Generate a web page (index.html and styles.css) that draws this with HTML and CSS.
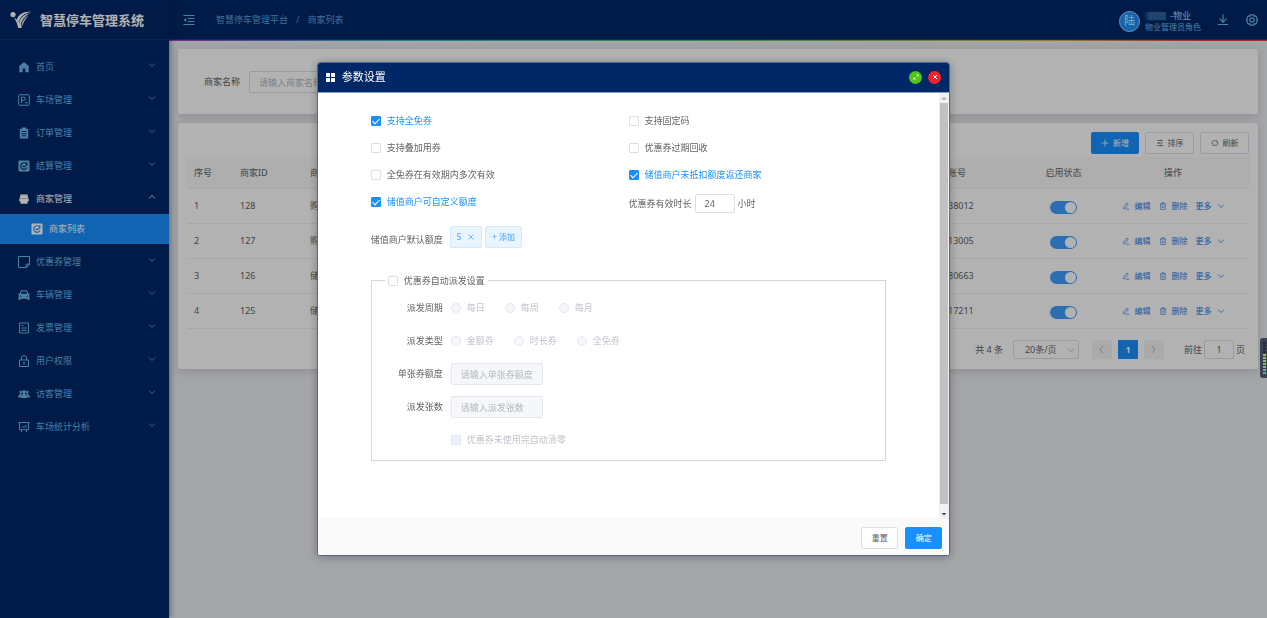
FILE: index.html
```html
<!DOCTYPE html>
<html lang="zh-CN">
<head>
<meta charset="utf-8">
<meta name="viewport" content="width=device-width, initial-scale=1">
<title>智慧停车管理系统</title>
<link rel="stylesheet" href="styles.css">
</head>
<body>
<svg class="sprite" aria-hidden="true">
  <symbol id="chevron" viewBox="0 0 8 8"><path d="M1 2.5 4 5.5 7 2.5" fill="none" stroke="currentColor" stroke-width=".8"/></symbol>
  <symbol id="pencil" viewBox="0 0 10 10"><path d="M2 6.300 6 1.200 7.800 2.600 3.900 7.900 1.700 8.400zM4.500 9H9" fill="none" stroke="currentColor" stroke-width=".8"/></symbol>
  <symbol id="trash" viewBox="0 0 10 10"><path d="M1 2.5h8M2.200 2.500v6.800h5.600V2.500M3.600 2.300V.9h2.800v1.400M4.100 4.500v3M5.900 4.500v3" fill="none" stroke="currentColor" stroke-width=".8"/></symbol>
  <symbol id="refresh-square" viewBox="0 0 12 12"><path fill="currentColor" d="M1.500.5h9a1 1 0 0 1 1 1v9a1 1 0 0 1-1 1h-9a1 1 0 0 1-1-1v-9a1 1 0 0 1 1-1z"/><path class="cut" d="M9 2.200 8.600 4A3.300 3.300 0 1 0 9 7.500M9.600 4.400 6 6.800 4.600 5.800" fill="none" stroke-width="1.100"/></symbol>
</svg>

<div class="app">
  <aside class="sidebar">
    <div class="brand">
      <svg class="brand-logo" viewBox="0 0 22 18" aria-hidden="true"><g fill="#fff"><circle cx="3" cy="3.500" r="2.600"/><path d="M3.500 6.300c2.200 2.200 3.700 6.200 4.700 10.700h3.400C10.300 12.500 8.100 8.500 3.500 6.300z"/><path d="M21.500.8C14-.2 7.800 3.500 7 8.500l2 3.100C9.400 6.500 13.500 2.500 21.500.8z"/><path d="M20.500 2.100c-6.800 1.400-10.600 5-11.200 10.200l1.400 3c.4-5.700 3.700-9.700 9.800-13.200z"/><path d="M18.500 4.700c-4.500 2.400-6.900 6.500-7.300 12.300 2-4.800 3.600-8.500 7.300-12.300z"/></g></svg>
      <h1 class="brand-name">智慧停车管理系统</h1>
    </div>
    <nav class="menu" aria-label="主菜单">
      <a class="menu-item" href="#"><svg class="icon" viewBox="0 0 12 12"><path d="M6 1 1.300 5v6.300H4.700V7.500h2.600v3.800h3.400V5z" fill="currentColor"/></svg><span>首页</span><svg class="arrow"><use href="#chevron"/></svg></a>
      <a class="menu-item" href="#"><svg class="icon" viewBox="0 0 12 12"><rect x=".7" y=".7" width="10.600" height="10.600" rx="1" fill="none" stroke="currentColor"/><path d="M3.500 9V3.200h2.200a1.600 1.600 0 0 1 0 3.200H3.500M7 8.800h2.800" fill="none" stroke="currentColor"/></svg><span>车场管理</span><svg class="arrow"><use href="#chevron"/></svg></a>
      <a class="menu-item" href="#"><svg class="icon" viewBox="0 0 12 12"><path d="M1.800 2h2V.6h4.400V2h2v9.500H1.800z" fill="currentColor"/><path d="M3.500 4.500h5M3.500 6.700h5M3.500 8.900h5" class="cut"/></svg><span>订单管理</span><svg class="arrow"><use href="#chevron"/></svg></a>
      <a class="menu-item" href="#"><svg class="icon"><use href="#refresh-square"/></svg><span>结算管理</span><svg class="arrow"><use href="#chevron"/></svg></a>
      <a class="menu-item open" href="#"><svg class="icon" viewBox="0 0 12 12"><path d="M2.500 1.500h7l.7 3.500H1.800zM1.300 5.200h9.400v3.300H1.300zM2.500 8.200h7v2.600h-7z" fill="currentColor"/></svg><span>商家管理</span><svg class="arrow"><use href="#chevron"/></svg></a>
      <a class="menu-sub" href="#" aria-current="page"><svg class="icon"><use href="#refresh-square"/></svg><span>商家列表</span></a>
      <a class="menu-item" href="#"><svg class="icon" viewBox="0 0 12 12"><path d="M.5.5h11v8l-3 3h-8zM11.400 8.100H8.300v3.300z" fill="none" stroke="currentColor"/></svg><span>优惠券管理</span><svg class="arrow"><use href="#chevron"/></svg></a>
      <a class="menu-item" href="#"><svg class="icon" viewBox="0 0 12 12"><path fill="currentColor" fill-rule="evenodd" d="M3 1.300h6l1.300 3.200 1.500-.3v1l-.8.300.4 1.500v4H9.500V9.700h-7V11H.6V7L1 5.500.2 5.200v-1l1.500.3zM3.700 2.400 2.900 4.800h6.200l-.8-2.400zM2 6.300v1.400h2zM10 6.300v1.400H8z"/></svg><span>车辆管理</span><svg class="arrow"><use href="#chevron"/></svg></a>
      <a class="menu-item" href="#"><svg class="icon" viewBox="0 0 12 12"><path d="M1.500 1h9v10h-9zM3.500 3.500h2M3.500 6h5M3.500 8.400h5" fill="none" stroke="currentColor"/></svg><span>发票管理</span><svg class="arrow"><use href="#chevron"/></svg></a>
      <a class="menu-item" href="#"><svg class="icon" viewBox="0 0 12 12"><path d="M1.500 5h9v6.500h-9zM3.500 5V3a2.500 2.500 0 0 1 5 0v2M6 7v2.800M5.200 7.500h1.600" fill="none" stroke="currentColor"/></svg><span>用户权限</span><svg class="arrow"><use href="#chevron"/></svg></a>
      <a class="menu-item" href="#"><svg class="icon" viewBox="0 0 12 12"><g fill="currentColor"><circle cx="6" cy="3.700" r="1.700"/><circle cx="2.800" cy="4.100" r="1.300"/><circle cx="9.200" cy="4.100" r="1.300"/><path d="M2.800 10C2.800 7.500 4.800 7.300 5 5h2c.2 2.300 2.200 2.500 2.200 5zM0 9.500c0-2.200 1.800-2.200 2-4h1.500v1.800L2.500 9.500zM12 9.500c0-2.200-1.800-2.200-2-4H8.500v1.800l1 2.200z"/></g></svg><span>访客管理</span><svg class="arrow"><use href="#chevron"/></svg></a>
      <a class="menu-item" href="#"><svg class="icon" viewBox="0 0 12 12"><path d="M.5 1.500h11M1.500 1.500v7.200h9V1.500M3.500 9v2.300M8.500 9v2.300M4 6.800V5.500M6 6.800V4.800M8 6.800V4" fill="none" stroke="currentColor"/></svg><span>车场统计分析</span><svg class="arrow"><use href="#chevron"/></svg></a>
    </nav>
  </aside>

  <div class="main">
    <header class="topbar">
      <button class="icon-btn" type="button" aria-label="收起菜单"><svg class="icon" viewBox="0 0 12 12"><path d="M.5 1.500h11M5 4.500h6.500M5 7.500h6.500M.5 10.500h11" stroke="currentColor" fill="none"/><path d="M3.200 4v4L.7 6z" fill="currentColor"/></svg></button>
      <nav class="crumbs" aria-label="面包屑"><a href="#">智慧停车管理平台</a><span>/</span><a href="#">商家列表</a></nav>
      <div class="user">
        <span class="avatar">陆</span>
        <div class="user-text">
          <div class="user-name"><span class="user-mask"></span>-物业</div>
          <div class="user-role">物业管理员角色</div>
        </div>
      </div>
      <button class="icon-btn" type="button" aria-label="下载"><svg class="icon" viewBox="0 0 12 12"><path d="M6 .5v7.500M2.500 4.700 6 8.200 9.500 4.700M.8 10.500h10.400" stroke="currentColor" stroke-width="1.200" fill="none"/></svg></button>
      <button class="icon-btn gear" type="button" aria-label="设置"><svg class="icon" viewBox="0 0 12 12"><path d="M4.300.8h3.400l.5 1.500 1.600-.3 1.700 3-1 1 1 1-1.700 3-1.600-.3-.5 1.500H4.300l-.5-1.500-1.600.3-1.700-3 1-1-1-1 1.700-3 1.600.3z" stroke="currentColor" stroke-width="1.200" fill="none"/><circle cx="6" cy="6" r="2.200" stroke="currentColor" stroke-width="1.200" fill="none"/></svg></button>
    </header>
    <div class="rainbow"></div>

    <main class="content">
      <form class="card filter">
        <label for="shop-name">商家名称</label>
        <input class="field shop-name" id="shop-name" type="text" placeholder="请输入商家名称">
      </form>

      <section class="card list">
        <div class="tools">
          <button class="btn primary" type="button"><svg viewBox="0 0 8 8"><path d="M4 .5v7M.5 4h7" stroke="currentColor" stroke-width=".8"/></svg>新增</button>
          <button class="btn" type="button"><svg viewBox="0 0 8 8"><path d="M1 1.500h6M1 4h6M1 6.500h6M5 .5v2M3 3v2M5 5.500v2" stroke="currentColor" stroke-width=".7"/></svg>排序</button>
          <button class="btn" type="button"><svg viewBox="0 0 8 8"><path d="M1.200 5V2.500L2 1.700h4V4M6.800 3v2.500l-.8.800H2V4.500" stroke="currentColor" stroke-width=".7" fill="none"/></svg>刷新</button>
        </div>
        <table class="grid">
          <colgroup><col class="c-no"><col class="c-id"><col><col class="c-account"><col class="c-state"><col class="c-action"></colgroup>
          <thead><tr><th>序号</th><th>商家ID</th><th>商家</th><th>账号</th><th class="mid">启用状态</th><th class="mid">操作</th></tr></thead>
          <tbody>
            <tr><td>1</td><td>128</td><td>购</td><td>38012</td><td class="mid"><input class="switch" type="checkbox" role="switch" aria-label="启用 128" checked></td><td><div class="actions"><a href="#"><svg><use href="#pencil"/></svg>编辑</a><a href="#"><svg><use href="#trash"/></svg>删除</a><a class="more" href="#">更多<svg><use href="#chevron"/></svg></a></div></td></tr>
            <tr><td>2</td><td>127</td><td>购</td><td>13005</td><td class="mid"><input class="switch" type="checkbox" role="switch" aria-label="启用 127" checked></td><td><div class="actions"><a href="#"><svg><use href="#pencil"/></svg>编辑</a><a href="#"><svg><use href="#trash"/></svg>删除</a><a class="more" href="#">更多<svg><use href="#chevron"/></svg></a></div></td></tr>
            <tr><td>3</td><td>126</td><td>储</td><td>80663</td><td class="mid"><input class="switch" type="checkbox" role="switch" aria-label="启用 126" checked></td><td><div class="actions"><a href="#"><svg><use href="#pencil"/></svg>编辑</a><a href="#"><svg><use href="#trash"/></svg>删除</a><a class="more" href="#">更多<svg><use href="#chevron"/></svg></a></div></td></tr>
            <tr><td>4</td><td>125</td><td>储</td><td>17211</td><td class="mid"><input class="switch" type="checkbox" role="switch" aria-label="启用 125" checked></td><td><div class="actions"><a href="#"><svg><use href="#pencil"/></svg>编辑</a><a href="#"><svg><use href="#trash"/></svg>删除</a><a class="more" href="#">更多<svg><use href="#chevron"/></svg></a></div></td></tr>
          </tbody>
        </table>
        <div class="pager">
          <span>共 4 条</span>
          <span class="size"><select class="field" aria-label="每页条数"><option>20条/页</option></select><svg><use href="#chevron"/></svg></span>
          <div class="pages">
            <button class="page prev" type="button" disabled aria-label="上一页"><svg><use href="#chevron"/></svg></button>
            <button class="page current" type="button" aria-current="page">1</button>
            <button class="page next" type="button" disabled aria-label="下一页"><svg><use href="#chevron"/></svg></button>
          </div>
          <label class="jump">前往<input class="field" type="text" value="1">页</label>
        </div>
      </section>
    </main>
  </div>
</div>

<div class="overlay">
  <section class="dialog" role="dialog" aria-modal="true" aria-labelledby="dialog-title">
    <header class="dialog-head">
      <svg class="tiles" viewBox="0 0 9 9" aria-hidden="true"><path d="M0 0h4v4H0zM5 0h4v4H5zM0 5h4v4H0zM5 5h4v4H5z" fill="#fff"/></svg>
      <h2 id="dialog-title">参数设置</h2>
      <button class="dot green" type="button" aria-label="全屏"><svg viewBox="0 0 8 8"><path d="M4.500 1.800h1.700v1.700M3.500 6.200H1.800V4.500M6.200 1.800 4.600 3.400M1.800 6.200l1.600-1.600" stroke="#fff" stroke-width=".7" fill="none"/></svg></button>
      <button class="dot red" type="button" aria-label="关闭"><svg viewBox="0 0 8 8"><path d="M2 2l4 4M6 2 2 6" stroke="#fff" fill="none"/></svg></button>
    </header>
    <div class="dialog-body">
      <form class="settings">
        <div class="options">
          <label class="check"><input type="checkbox" checked><span>支持全免券</span></label>
          <label class="check"><input type="checkbox"><span>支持固定码</span></label>
          <label class="check"><input type="checkbox"><span>支持叠加用券</span></label>
          <label class="check"><input type="checkbox"><span>优惠券过期回收</span></label>
          <label class="check"><input type="checkbox"><span>全免券在有效期内多次有效</span></label>
          <label class="check"><input type="checkbox" checked><span>储值商户未抵扣额度返还商家</span></label>
          <label class="check"><input type="checkbox" checked><span>储值商户可自定义额度</span></label>
          <label class="hours">优惠券有效时长<input class="field" type="text" value="24">小时</label>
        </div>
        <div class="quota">
          <span class="quota-label">储值商户默认额度</span>
          <span class="tag">5<button type="button" aria-label="删除 5"><svg viewBox="0 0 8 8"><path d="M1.500 1.500l5 5M6.500 1.500l-5 5" stroke="currentColor" stroke-width=".7"/></svg></button></span>
          <button class="tag add" type="button">+ 添加</button>
        </div>
        <fieldset class="auto">
          <legend><label class="check"><input type="checkbox"><span>优惠券自动派发设置</span></label></legend>
          <div class="row"><span class="row-label">派发周期</span><div class="radios">
            <label class="check"><input type="radio" name="cycle" disabled><span>每日</span></label>
            <label class="check"><input type="radio" name="cycle" disabled><span>每周</span></label>
            <label class="check"><input type="radio" name="cycle" disabled><span>每月</span></label></div></div>
          <div class="row"><span class="row-label">派发类型</span><div class="radios">
            <label class="check"><input type="radio" name="kind" disabled><span>金额券</span></label>
            <label class="check"><input type="radio" name="kind" disabled><span>时长券</span></label>
            <label class="check"><input type="radio" name="kind" disabled><span>全免券</span></label></div></div>
          <div class="row"><label class="row-label" for="amount">单张券额度</label><input class="field wide" id="amount" type="text" placeholder="请输入单张券额度" disabled></div>
          <div class="row"><label class="row-label" for="count">派发张数</label><input class="field wide" id="count" type="text" placeholder="请输入派发张数" disabled></div>
          <div class="row"><span class="row-label"></span><label class="check"><input type="checkbox" disabled><span>优惠券未使用完自动清零</span></label></div>
        </fieldset>
      </form>
      <div class="scrollbar" aria-hidden="true"><svg viewBox="0 0 10 10"><path d="M2.500 6.500h5L5 4z" fill="#a3a3a3"/></svg><div class="thumb"></div><svg viewBox="0 0 10 10"><path d="M2.500 4h5L5 6.500z" fill="#505050"/></svg></div>
    </div>
    <footer class="dialog-foot">
      <button class="btn" type="button">重置</button>
      <button class="btn primary" type="button">确定</button>
    </footer>
  </section>
</div>

<div class="meter" aria-hidden="true"><div class="meter-bars"></div></div>
</body>
</html>
```

FILE: styles.css
```css
* { box-sizing: border-box; }

:root {
  --navy: #002766;
  --blue: #1890ff;
  --sky: #6bb9ec;
  --text: #606266;
  --line: #dcdfe6;
}

body {
  margin: 0;
  background: #eaecf0;
  color: var(--text);
  font: 9px/14px "Noto Sans", "Noto Sans CJK SC", sans-serif;
}

a { color: inherit; text-decoration: none; }
button, input, select { margin: 0; font: inherit; color: inherit; }
button { padding: 0; border: 0; background: none; }
svg { display: block; flex: none; }
.sprite { position: absolute; width: 0; height: 0; }
.icon { width: 12px; height: 12px; }
.cut { stroke: var(--navy); }

.app { display: flex; min-height: 100vh; }

/* Sidebar */
.sidebar {
  flex: none;
  width: 169px;
  background: var(--navy);
  color: var(--sky);
  box-shadow: 2px 0 5px rgba(0, 21, 41, .35);
  z-index: 1;
}
.brand {
  display: flex;
  align-items: center;
  gap: 8px;
  height: 40px;
  padding-left: 10px;
  border-bottom: 1px solid #0e3a70;
}
.brand-logo { width: 22px; height: 18px; }
.brand-name { margin: 0; color: #fff; font-size: 13px; line-height: 20px; font-weight: 700; }
.menu { display: flex; flex-direction: column; padding-top: 12px; }
.menu-item {
  display: flex;
  align-items: center;
  gap: 6px;
  height: 30px;
  margin-bottom: 3px;
  padding: 0 13px 0 18px;
}
.menu-item .arrow { width: 8px; height: 8px; margin: 0 0 4px auto; }
.menu-item.open { margin-bottom: 0; color: #fff; }
.menu-item.open .arrow { transform: rotate(180deg); }
.menu-sub {
  display: flex;
  align-items: center;
  gap: 6px;
  height: 30px;
  margin-bottom: 3px;
  padding-left: 31px;
  background: var(--blue);
  color: #fff;
}
.menu-sub .icon { --navy: #1890ff; }

/* Top bar */
.main { flex: 1; min-width: 0; }
.topbar {
  display: flex;
  align-items: center;
  height: 39px;
  padding: 0 9px 0 14px;
  background: var(--navy);
  color: var(--sky);
}
.rainbow {
  height: 2px;
  background: linear-gradient(90deg, #b03ad0, #6a6ce0 8%, #35b9c6 20%, #4fc36b 50%, #d8b33a 80%, #e5443a 94%);
  border-top: 1px solid #1c3c74;
}
.icon-btn { display: grid; }
.crumbs { display: flex; gap: 8px; margin: 0 auto 0 21px; color: #5fa5da; }
.user { display: flex; align-items: center; gap: 5px; margin-right: 16px; padding-top: 3px; }
.avatar {
  display: grid;
  place-items: center;
  width: 21px;
  height: 21px;
  border: 1px solid #a9d4f8;
  border-radius: 50%;
  background: var(--blue);
  color: #d5ecff;
  font-size: 11px;
}
.user-text { line-height: 11px; }
.user-name { display: flex; align-items: center; gap: 4px; padding-left: 3px; color: #a5d8ff; }
.user-mask { width: 18px; height: 8px; background: #2f629c; box-shadow: -3px 0 3px #1c4a86; }
.user-role { font-size: 8px; }
.gear { margin-left: 17px; }

/* Content */
.content { display: flex; flex-direction: column; gap: 9px; padding: 8px 9px 9px; }
.card { border-radius: 2px; background: #fff; box-shadow: 0 2px 8px rgba(0, 0, 0, .14); }
.filter { display: flex; align-items: center; gap: 9px; padding: 22px 26px 21px; }
.field {
  height: 19px;
  padding: 0 9px;
  border: 1px solid var(--line);
  border-radius: 2px;
  background: #fff;
  outline: 0;
}
.field::placeholder { color: #b4b8bf; opacity: 1; }
.shop-name { width: 140px; height: 22px; }

.list { padding: 9px 9px 10px; }
.tools { display: flex; justify-content: flex-end; gap: 6px; }
.btn {
  display: flex;
  align-items: center;
  justify-content: center;
  gap: 4px;
  min-width: 49px;
  height: 22px;
  border: 1px solid var(--line);
  border-radius: 2px;
  background: #fff;
  font-size: 8px;
}
.btn svg { width: 8px; height: 8px; }
.btn.primary { border-color: var(--blue); background: var(--blue); color: #fff; }
.tools .primary { min-width: 48px; }

.grid { width: 100%; margin-top: 3px; border-collapse: separate; border-spacing: 0; table-layout: fixed; }
.grid th, .grid td { height: 35px; padding: 0 7px; border-bottom: 1px solid #ebeef5; text-align: left; font-weight: 400; }
.grid th { height: 32px; background: #fafafa; }
.grid .mid { text-align: center; }
.c-no { width: 46px; }
.c-id { width: 70px; }
.c-account { width: 89px; }
.c-state { width: 67px; }
.c-action { width: 152px; }
.switch {
  appearance: none;
  display: block;
  width: 27px;
  height: 13px;
  margin: 2px auto 0;
  padding: 1px;
  border-radius: 7px;
  background: var(--line);
}
.switch::before { content: ""; display: block; width: 11px; height: 11px; border-radius: 50%; background: #fff; }
.switch:checked { background: #409eff; }
.switch:checked::before { margin-left: auto; }
.actions { display: flex; justify-content: center; gap: 8px; color: #2a7de8; font-size: 8px; }
.actions a { display: flex; align-items: center; gap: 5px; }
.actions svg { width: 8px; height: 8px; }

.pager { display: flex; align-items: center; justify-content: flex-end; margin-top: 11px; padding-right: 4px; }
.size { display: grid; align-items: center; width: 66px; margin: 0 13px 0 10px; }
.size select, .size svg { grid-area: 1 / 1; }
.size select { appearance: none; width: 100%; padding: 0 11px; }
.size svg { justify-self: end; width: 8px; height: 8px; margin-right: 4px; color: #b4b8bf; }
.pages { display: flex; gap: 6px; }
.page { display: grid; place-items: center; width: 20px; height: 19px; border-radius: 1px; background: #f4f4f5; color: #a0a4ab; }
.page svg { width: 9px; height: 9px; }
.page.current { background: var(--blue); color: #fff; font-weight: 700; }
.prev svg { transform: rotate(90deg); }
.next svg { transform: rotate(-90deg); }
.jump { display: flex; align-items: center; gap: 2px; margin-left: 20px; }
.jump .field { width: 30px; padding: 0; text-align: center; }

/* Dialog */
.overlay { position: fixed; inset: 0; z-index: 10; display: grid; place-items: center; background: rgba(0, 0, 0, .3); }
.dialog {
  display: flex;
  flex-direction: column;
  width: 50vw;
  height: 80vh;
  overflow: hidden;
  border: 1px solid #4d689a;
  border-radius: 3px;
  background: #fff;
  box-shadow: 0 1px 10px rgba(0, 0, 0, .3);
}
.dialog-head {
  display: flex;
  align-items: center;
  gap: 7px;
  height: 30px;
  padding: 0 8px;
  border-bottom: 1px solid #8fa2c3;
  background: var(--navy);
  color: #fff;
}
.dialog-head h2 { flex: 1; margin: 0; font-size: 11px; font-weight: 400; }
.tiles { width: 9px; height: 9px; }
.dot { display: grid; place-items: center; width: 13px; height: 13px; border-radius: 50%; }
.dot + .dot { margin-left: -1px; }
.dot svg { width: 8px; height: 8px; }
.green { background: #52c41a; }
.red { background: #f5222d; }

.dialog-body { flex: 1; display: flex; min-height: 0; }
.settings { flex: 1; padding: 15px 53px 0; overflow: hidden; }
.options { display: grid; grid-template-columns: 1fr 1fr; grid-auto-rows: 27px; align-items: center; }
.check { display: flex; align-items: center; gap: 6px; }
.check input {
  appearance: none;
  display: grid;
  place-items: center;
  width: 10px;
  height: 10px;
  border: 1px solid var(--line);
  border-radius: 1px;
  background: #fff;
}
.check input[type="radio"] { border-radius: 50%; }
.check input:checked { border-color: var(--blue); background: var(--blue); }
.check input:checked::after {
  content: "";
  width: 3px;
  height: 6px;
  margin-bottom: 2px;
  border: solid #fff;
  border-width: 0 1px 1px 0;
  transform: rotate(45deg);
}
.check input:checked + span { color: var(--blue); }
.check input:disabled { border-color: #e4e7ed; background: #f5f7fa; }
.check input[type="checkbox"]:disabled { background: #edf2fc; }
.check input:disabled + span { color: #c0c4cc; }
.hours { display: flex; align-items: center; gap: 3px; padding-top: 3px; }
.hours .field { width: 40px; }

.quota { display: flex; align-items: center; gap: 3px; margin-top: 10px; }
.quota-label { margin: 6px 4px 0 0; }
.tag {
  display: flex;
  align-items: center;
  gap: 6px;
  height: 22px;
  padding: 0 6px;
  border: 1px solid #d1e9ff;
  border-radius: 2px;
  background: #e8f4ff;
  color: #409eff;
  font-size: 8px;
}
.tag svg { width: 8px; height: 8px; }

.auto { min-width: 0; margin: 26px 0 0; padding: 4px 13px 3px; border: 1px solid #d3d5d9; }
.auto legend { height: 14px; padding: 0 3px; }
.row { display: flex; align-items: center; gap: 8px; height: 33px; }
.row-label { width: 58px; text-align: right; }
.radios { display: flex; gap: 20px; }
.wide { width: 92px; height: 22px; }
.field:disabled { border-color: #e4e7ed; background: #f5f7fa; }

.scrollbar { display: flex; flex-direction: column; width: 10px; background: #f1f1f1; }
.scrollbar svg { width: 10px; height: 10px; }
.thumb { flex: 1; margin: 0 1px 5px; background: #c1c1c1; }

.dialog-foot { display: flex; align-items: center; justify-content: flex-end; gap: 7px; height: 36px; padding: 2px 7px 0; background: #fafafa; }
.dialog-foot .btn { min-width: 37px; }

.meter {
  position: fixed;
  top: 338px;
  right: 0;
  z-index: 11;
  width: 7px;
  height: 40px;
  padding: 4px 1px 3px 3px;
  border-radius: 3px 0 0 3px;
  background: #3c4154;
}
.meter-bars {
  height: 100%;
  background:
    repeating-linear-gradient(transparent 0 2px, #3c4154 2px 3px),
    linear-gradient(#252a38 0 32%, #c6b643 34%, #8fc15a 60%, #37b8a0);
}
```
